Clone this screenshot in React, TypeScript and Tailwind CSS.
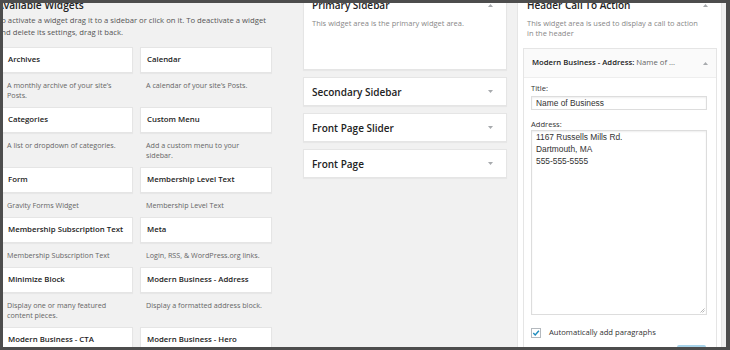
import React from "react";

function Tri({ up = false }: { up?: boolean }) {
  return (
    <svg width="5" height="3" viewBox="0 0 5 3" className="block shrink-0">
      <polygon points={up ? "0,3 5,3 2.5,0" : "0,0 5,0 2.5,3"} fill="#a7aaad" />
    </svg>
  );
}

const rows: [string, string][][] = [
  [
    ["Archives", "A monthly archive of your site\u2019s Posts."],
    ["Calendar", "A calendar of your site\u2019s Posts."],
  ],
  [
    ["Categories", "A list or dropdown of categories."],
    ["Custom Menu", "Add a custom menu to your sidebar."],
  ],
  [
    ["Form", "Gravity Forms Widget"],
    ["Membership Level Text", "Membership Level Text"],
  ],
  [
    ["Membership Subscription Text", "Membership Subscription Text"],
    ["Meta", "Login, RSS, & WordPress.org links."],
  ],
  [
    ["Minimize Block", "Display one or many featured content pieces."],
    ["Modern Business - Address", "Display a formatted address block."],
  ],
  [
    ["Modern Business - CTA", "Display a call to action block."],
    ["Modern Business - Hero", "Display a hero block."],
  ],
];

function WidgetItem({ title, desc }: { title: string; desc: string }) {
  return (
    <div className="flex flex-col">
      <div className="h-[26px] bg-white border border-[#e5e5e5] shadow-[0_1px_1px_rgba(0,0,0,0.04)] flex items-center pl-[6px] text-[7.8px] font-semibold text-[#222] whitespace-nowrap">
        {title}
      </div>
      <div className="pt-[7px] pb-[7px] pl-[6px] pr-[9px] text-[7.2px] leading-[10px] text-[#666]">
        {desc}
      </div>
    </div>
  );
}

function CollapsedSidebar({ title }: { title: string }) {
  return (
    <div className="h-[29px] bg-white border border-[#e5e5e5] shadow-[0_1px_1px_rgba(0,0,0,0.04)] flex items-center justify-between pl-[8px] pr-[13px]">
      <span className="text-[10px] font-semibold text-[#222] leading-[14px]">{title}</span>
      <Tri />
    </div>
  );
}

export default function App() {
  return (
    <div className="w-[730px] h-[350px] bg-[#4d4d4d] pt-[3px] pl-[3px] pr-[4px] pb-[3px] font-['Open_Sans',sans-serif]">
      <div className="w-full h-full bg-[#f1f1f1] overflow-hidden">
        <div className="flex items-start mt-[-14px] ml-[-5px] w-[800px]">
          {/* Available widgets */}
          <div className="w-[274px] shrink-0 pt-[9px]">
            <h2 className="text-[10.2px] leading-[14px] font-semibold text-[#222] ml-[-1px] whitespace-nowrap">
              Available Widgets
            </h2>
            <p className="mt-[2px] ml-[-1px] w-[274px] text-[7.7px] leading-[12px] text-[#555]">
              To activate a widget drag it to a sidebar or click on it. To deactivate a widget and delete its settings, drag it back.
            </p>
            <div className="mt-[9px] ml-[3px] grid grid-cols-[132px_132px] gap-x-[7px]">
              {rows.map((r, i) => (
                <React.Fragment key={i}>
                  <WidgetItem title={r[0][0]} desc={r[0][1]} />
                  <WidgetItem title={r[1][0]} desc={r[1][1]} />
                </React.Fragment>
              ))}
            </div>
          </div>

          {/* Middle sidebars */}
          <div className="w-[204px] shrink-0 ml-[31px] flex flex-col gap-[7px]">
            <div className="bg-white border border-[#e5e5e5] shadow-[0_1px_1px_rgba(0,0,0,0.04)] pt-[8px] pb-[41px] pl-[8px] pr-[13px]">
              <div className="flex items-center justify-between h-[14px]">
                <span className="text-[10px] font-semibold text-[#222] leading-[14px]">Primary Sidebar</span>
                <Tri up />
              </div>
              <p className="mt-[6px] text-[7.5px] leading-[10px] text-[#888]">
                This widget area is the primary widget area.
              </p>
            </div>
            <CollapsedSidebar title="Secondary Sidebar" />
            <CollapsedSidebar title="Front Page Slider" />
            <CollapsedSidebar title="Front Page" />
          </div>

          {/* Right sidebar */}
          <div className="w-[205px] shrink-0 ml-[10px] bg-white border border-[#e5e5e5] pt-[8px] pl-[5px] pr-[4px] pb-[20px]">
            <div className="pl-[4px] pr-[9px]">
              <div className="flex items-center justify-between h-[14px]">
                <span className="text-[10px] font-semibold text-[#222] leading-[14px] whitespace-nowrap">Header Call To Action</span>
                <Tri up />
              </div>
              <p className="mt-[6px] text-[7.5px] leading-[10px] text-[#888] pr-[2px]">
                This widget area is used to display a call to action in the header
              </p>
            </div>

            <div className="mt-[10px] border border-[#e5e5e5] bg-white">
              <div className="h-[29px] bg-[#fafafa] border-b border-[#eeeeee] flex items-center justify-between pl-[8px] pr-[8px]">
                <span className="text-[7.7px] text-[#222] whitespace-nowrap">
                  <span className="font-semibold">Modern Business - Address:</span>
                  <span className="text-[#666]"> Name of ...</span>
                </span>
                <Tri up />
              </div>
              <div className="pt-[5px] pl-[7px] pr-[9px] pb-[10px] flex flex-col">
                <div className="text-[7.6px] leading-[10px] text-[#333]">Title:</div>
                <div className="mt-[3px] h-[14px] border border-[#dddddd] shadow-[inset_0_1px_2px_rgba(0,0,0,0.07)] flex items-center pl-[4px] font-['Liberation_Sans',Arial,sans-serif] text-[8.4px] text-[#333]">
                  Name of Business
                </div>
                <div className="mt-[9px] text-[7.6px] leading-[10px] text-[#333]">Address:</div>
                <div className="relative mt-[1px]">
                  <textarea
                    readOnly
                    defaultValue={"1167 Russells Mills Rd.\nDartmouth, MA\n555-555-5555"}
                    className="block w-full h-[185px] border border-[#dddddd] shadow-[inset_0_1px_2px_rgba(0,0,0,0.07)] pl-[4px] pt-0 font-['Liberation_Sans',Arial,sans-serif] text-[8.4px] leading-[12px] text-[#333] resize-none outline-none bg-white"
                  />
                  <svg width="5" height="5" viewBox="0 0 5 5" className="absolute right-[2px] bottom-[2px]">
                    <path d="M0.5 4.5 L4.5 0.5 M2.5 4.5 L4.5 2.5" stroke="#999" strokeWidth="0.7" />
                  </svg>
                </div>
                <div className="mt-[13px] h-[10px] flex items-center">
                  <svg width="10" height="10" viewBox="0 0 10 10" className="block shrink-0">
                    <rect x="0.5" y="0.5" width="9" height="9" fill="#fff" stroke="#b4b9be" />
                    <path d="M2.3 5.1 L4.2 7 L7.9 2.7" fill="none" stroke="#1e8cbe" strokeWidth="1.4" />
                  </svg>
                  <span className="ml-[8px] text-[7.65px] text-[#333] whitespace-nowrap">Automatically add paragraphs</span>
                </div>
                <div className="mt-[7px] flex justify-end pr-[1px]">
                  <div className="w-[29px] h-[18px] bg-[#a8d4ea] rounded-[2px]" />
                </div>
              </div>
            </div>
          </div>
        </div>
      </div>
    </div>
  );
}
